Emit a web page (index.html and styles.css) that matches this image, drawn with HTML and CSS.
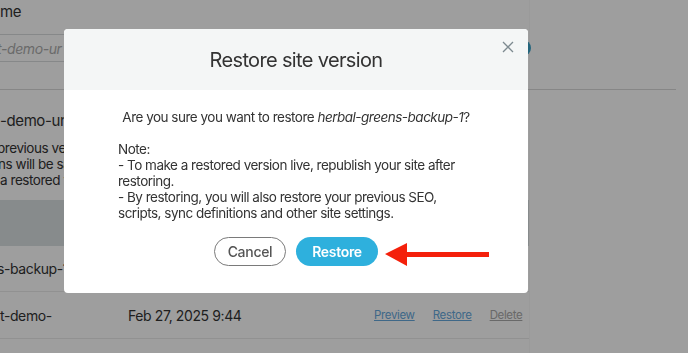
FILE: index.html
```html
<!DOCTYPE html>
<html>
<head>
<meta charset="utf-8">
<link rel="stylesheet" href="styles.css">
</head>
<body>
<div class="page">
  <div class="label">me</div>
  <div class="input-row">
    <div class="input"><span class="ph">t-demo-ur</span></div>
    <div class="go"></div>
  </div>
  <div class="section">
    <div class="site">-demo-un</div>
    <div class="desc">
      <div class="cut">previous ver</div>
      <div class="cut2">ns will be sa</div>
      <div>a restored v</div>
    </div>
  </div>
  <div class="thead"></div>
  <div class="row"><span class="cell cut">s-backup-1</span></div>
  <div class="row last">
    <span class="cell name">t-demo-</span>
    <span class="cell date">Feb 27, 2025 9:44</span>
    <span class="links"><a class="lnk">Preview</a><a class="lnk">Restore</a><a class="lnk del">Delete</a></span>
  </div>
</div>

<div class="overlay">
  <div class="modal">
    <div class="mhead">
      <h1 class="title">Restore site version</h1>
      <svg class="close" width="12" height="12" viewBox="0 0 12 12"><path d="M1 1L11 11M11 1L1 11" stroke="#7d8a90" stroke-width="1.3" fill="none"/></svg>
    </div>
    <div class="mbody">
      <p class="q">Are you sure you want to restore <em>herbal-greens-backup-1</em>?</p>
      <p class="note">Note:<br>- To make a restored version live, republish your site after restoring.<br>- By restoring, you will also restore your previous SEO, scripts, sync definitions and other site settings.</p>
      <div class="actions">
        <button class="btn cancel">Cancel</button>
        <button class="btn restore">Restore</button>
      </div>
    </div>
  </div>
  <svg class="arrow" width="106" height="26" viewBox="0 0 106 26"><polygon points="0,11 22,0 22,9 104,9 104,14 22,14 22,23" fill="#f4200b"/></svg>
</div>
</body>
</html>
```
FILE: styles.css
```css
* { box-sizing: border-box; }
html, body { margin: 0; padding: 0; }
body {
  width: 688px;
  height: 353px;
  overflow: hidden;
  background: #fff;
  font-family: Inter, "Noto Sans", sans-serif;
  color: #333;
  letter-spacing: -0.4px;
}
.page {
  width: 530px;
  height: 353px;
  border-right: 1px solid #f8f8f8;
}
.label {
  height: 34px;
  padding-top: 3px;
  font-size: 15px;
  line-height: 18px;
}
.input-row {
  display: flex;
  align-items: center;
  height: 28px;
}
.input {
  flex: 1;
  height: 28px;
  border-top: 1px solid #d9dcdd;
  border-bottom: 1px solid #d9dcdd;
  font-size: 14px;
  line-height: 27px;
  margin-left: -3px;
}
.ph { font-style: italic; color: #acacac; }
.go {
  width: 16px;
  height: 16px;
  border-radius: 50%;
  background: #3aa3c9;
  margin-left: -6px;
  margin-right: -2px;
}
.section {
  margin-top: 27px;
  border-top: 1px solid #d8d8d8;
  width: 676px;
  padding-top: 21px;
}
.site { font-size: 15px; line-height: 20px; margin-bottom: 9px; }
.desc { font-size: 13.5px; line-height: 16px; letter-spacing: -0.45px; }
.cut { margin-left: -3px; }
.cut2 { margin-left: -2px; }
.thead {
  margin-top: 12px;
  height: 46px;
  background: #dae0e2;
}
.row {
  display: flex;
  align-items: center;
  height: 46px;
  font-size: 14px;
  border-bottom: 1px solid #eaeaea;
}
.row.last { height: 47px; }
.cell { white-space: nowrap; flex-shrink: 0; }
.name { width: 128px; }
.date { width: 246px; }
.links { display: flex; gap: 18px; font-size: 11.5px; letter-spacing: -0.35px; flex-shrink: 0; }
.lnk { text-decoration: underline; color: #66a8dc; }
.lnk.del { color: #aaa; }

.overlay {
  position: fixed;
  inset: 0;
  background: rgba(0, 0, 0, 0.38);
  padding: 29px 0 0 64px;
}
.modal {
  width: 464px;
  height: 264px;
  background: #fff;
  border-radius: 4px;
  overflow: hidden;
}
.mhead {
  position: relative;
  height: 61px;
  background: #f4f6f6;
  display: flex;
  align-items: center;
  justify-content: center;
}
.title {
  margin: 0;
  font-size: 20px;
  font-weight: 400;
  color: #333;
  letter-spacing: -0.65px;
}
.close { position: absolute; top: 12px; right: 14px; }
.mbody {
  padding: 19px 54px 0 54px;
  font-size: 13.5px;
  line-height: 16px;
  color: #333;
  letter-spacing: -0.5px;
}
.q { margin: 0 0 16px; text-align: center; white-space: nowrap; margin-left: -20px; margin-right: -20px; }
.note { margin: 0; }
.actions {
  display: flex;
  justify-content: center;
  gap: 10px;
  margin-top: 16px;
}
.btn {
  height: 29px;
  border-radius: 15px;
  font-family: inherit;
  font-size: 14px;
  font-weight: 500;
  padding: 0;
  letter-spacing: -0.3px;
}
.cancel {
  width: 72px;
  background: #fff;
  border: 1px solid #7a7a7a;
  color: #555;
}
.restore {
  width: 82px;
  background: #2eb0dd;
  border: none;
  color: #fff;
  font-weight: 600;
}
.arrow { position: absolute; left: 385px; top: 243px; }
```
